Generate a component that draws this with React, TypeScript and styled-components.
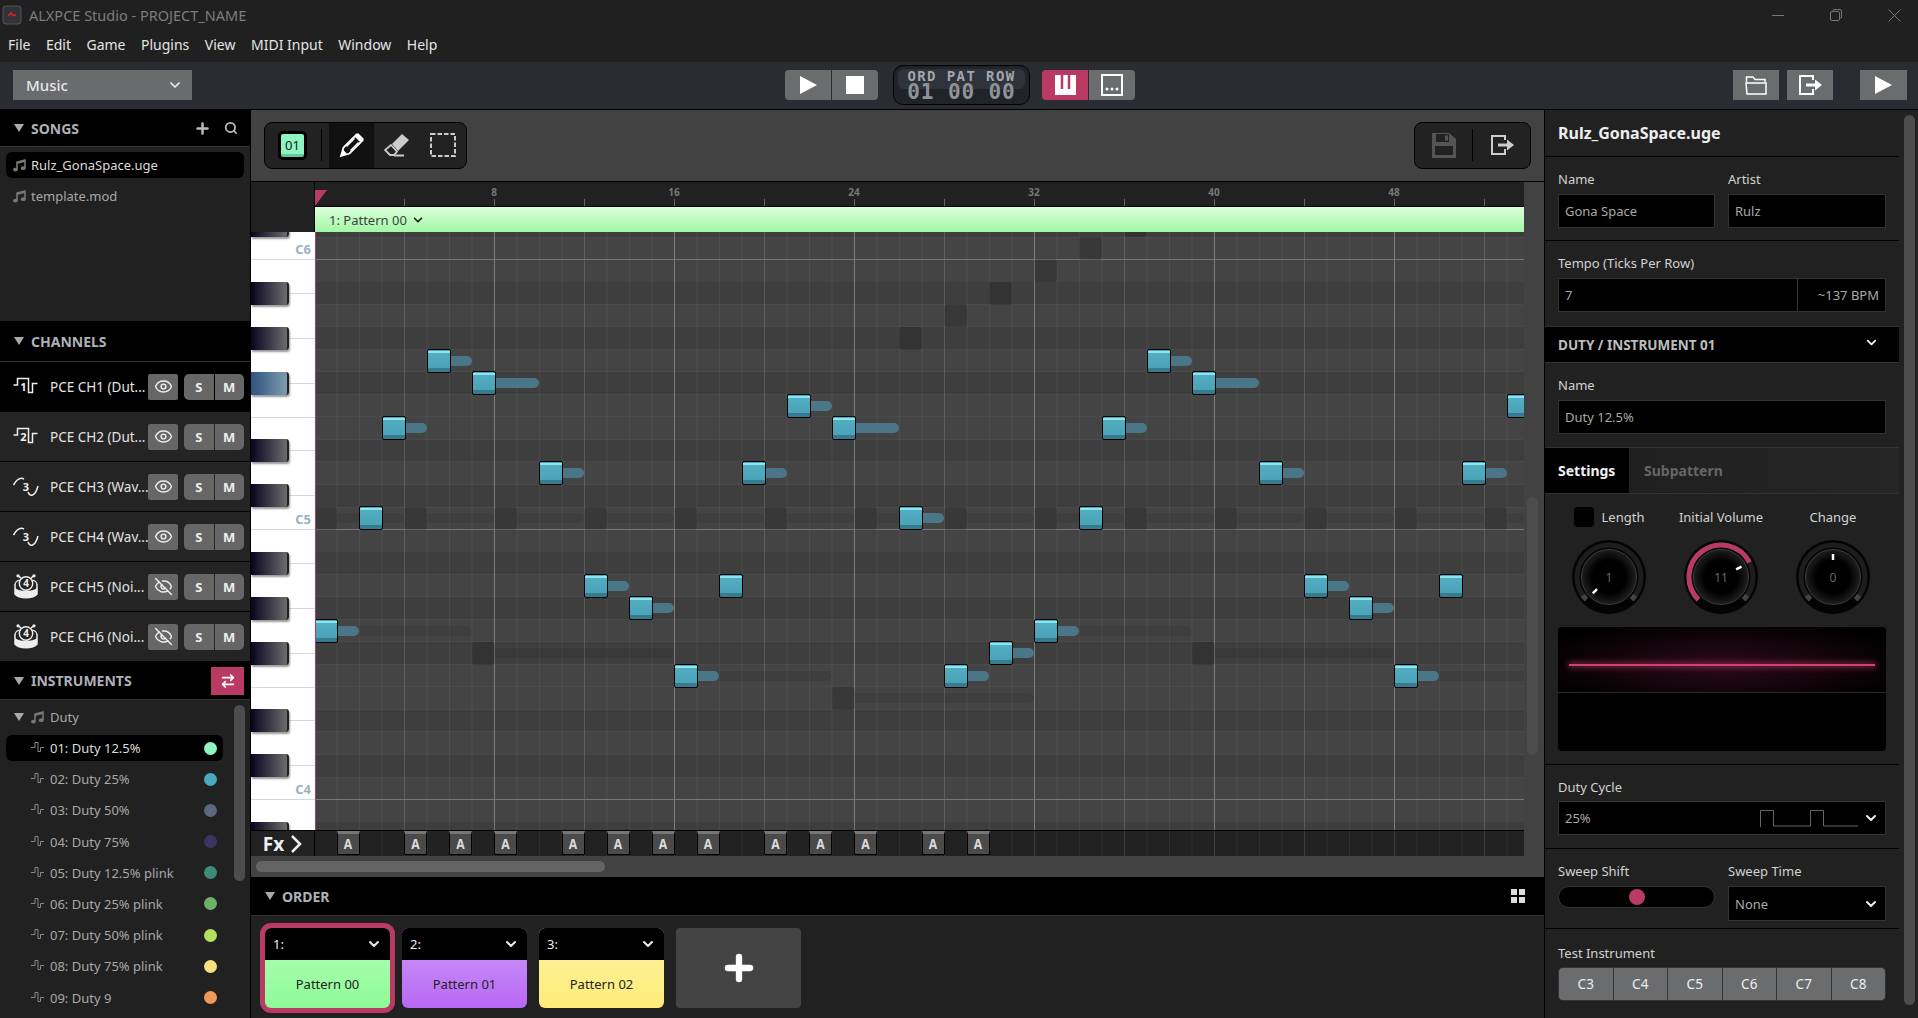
import React from "react";
import styled, { createGlobalStyle } from "styled-components";
import { ArrowRightLeft, ChevronDown, Eye, EyeOff, Plus, Search } from "lucide-react";

const FONT = `"Noto Sans", "Open Sans", sans-serif`;
const CELL = 22.5;
const ROW = 22.5;
const PINK = "#b93a63";

// Styled
const GlobalStyle = createGlobalStyle`
  html, body, #root {
    margin: 0;
    height: 100%;
    background: #212121;
  }
  body {
    overflow: hidden;
    font-family: ${FONT};
  }
  * {
    box-sizing: border-box;
  }
`;
const Page = styled.div`
  display: flex;
  flex-direction: column;
  width: 100%;
  height: 100vh;
  overflow: hidden;
`;
const TitleBar = styled.div`
  display: flex;
  align-items: center;
  flex: none;
  height: 30px;
  padding: 0 0 0 2px;
  background: #202020;
  color: #7d7d7d;
  font-size: 14.5px;
  gap: 7px;
`;
const WindowControls = styled.div`
  display: flex;
  align-items: center;
  gap: 46px;
  margin-left: auto;
  padding-right: 17px;
`;
const MenuBar = styled.div`
  display: flex;
  align-items: center;
  flex: none;
  height: 32px;
  padding: 0 8px 4px;
  gap: 15.5px;
  background: #202020;
  color: #e4e4e4;
  font-size: 14px;
`;
const Header = styled.div`
  display: flex;
  align-items: center;
  flex: none;
  height: 48px;
  padding: 0 11px 1px 13px;
  background: #2a2c31;
  border-bottom: 1px solid #000;
`;
const ModeSelect = styled.div`
  display: flex;
  align-items: center;
  justify-content: space-between;
  width: 179px;
  height: 30px;
  padding: 0 9px 0 13px;
  background: #6a6b6d;
  color: #e6e6e6;
  font-size: 15px;
  font-weight: 500;
`;
const Transport = styled.div`
  display: flex;
  align-items: center;
  gap: 15px;
  margin-left: 593px;
`;
const BtnGroup = styled.div`
  display: flex;
  border-radius: 4px;
  overflow: hidden;
  gap: 1px;
  background: #2a2c31;
`;
const HeadBtn = styled.div<{ $w?: number; $active?: boolean; $ml?: number }>`
  display: flex;
  align-items: center;
  justify-content: center;
  width: ${({ $w }) => $w ?? 46}px;
  height: 30px;
  margin-left: ${({ $ml }) => $ml ?? 0}px;
  background: ${({ $active }) => ($active ? PINK : "#6a6c6e")};
`;
const Counter = styled.div`
  position: relative;
  display: flex;
  flex-direction: column;
  align-items: center;
  width: 137px;
  height: 40px;
  margin-right: -3px;
  padding-top: 4px;
  border: 1px solid #000;
  border-radius: 10px;
  background: #20232a;
  font-family: "DejaVu Sans Mono", "Liberation Mono", monospace;
  font-weight: 700;
  color: #a3a7ab;
  &::before {
    content: "";
    position: absolute;
    left: 4px;
    right: 4px;
    top: 3px;
    height: 20px;
    border-radius: 6px;
    background: #2f343c;
  }
`;
const CounterTop = styled.span`
  position: relative;
  font-size: 14px;
  letter-spacing: 1.4px;
  height: 13px;
  line-height: 13px;
  white-space: pre;
`;
const CounterBottom = styled.span`
  position: relative;
  font-size: 21px;
  letter-spacing: 0.9px;
  height: 19px;
  line-height: 19px;
  white-space: pre;
  color: #8f9397;
`;
const HeaderRight = styled.div`
  display: flex;
  align-items: center;
  gap: 8px;
  margin-left: auto;
`;
const Main = styled.div`
  flex: 1;
  display: flex;
  min-height: 0;
`;

// Sidebar
const Sidebar = styled.aside`
  display: flex;
  flex-direction: column;
  width: 251px;
  flex: none;
  border-right: 1px solid #000;
  background: #212121;
`;
const PaneHead = styled.div<{ $h: number }>`
  display: flex;
  align-items: center;
  flex: none;
  height: ${({ $h }) => $h}px;
  padding: 0 6px 0 14px;
  background: #000;
  border-bottom: 1px solid #333;
  color: #aeb2b8;
  font-size: 14px;
  font-weight: 700;
`;
const Triangle = styled.span`
  flex: none;
  width: 0;
  height: 0;
  margin-right: 7px;
  border-left: 5px solid transparent;
  border-right: 5px solid transparent;
  border-top: 8px solid #aaa;
`;
const PaneActions = styled.div`
  display: flex;
  align-items: center;
  gap: 13px;
  margin-left: auto;
  padding-right: 6px;
  color: #bbb;
`;
const SongList = styled.div`
  display: flex;
  flex-direction: column;
  height: 174px;
  flex: none;
  padding: 5px 6px;
  gap: 5px;
`;
const TreeRow = styled.div<{ $selected?: boolean; $indent?: number }>`
  display: flex;
  align-items: center;
  flex: none;
  height: 26px;
  padding-left: ${({ $indent }) => $indent ?? 7}px;
  gap: 5px;
  border-radius: 6px;
  background: ${({ $selected }) => ($selected ? "#000" : "transparent")};
  color: ${({ $selected }) => ($selected ? "#dcdcdc" : "#a8a8a8")};
  font-size: 13px;
`;
const ChannelRow = styled.div<{ $active?: boolean }>`
  display: flex;
  align-items: center;
  flex: none;
  height: 50px;
  padding: 0 6px 0 13px;
  background: ${({ $active }) => ($active ? "#000" : "#242424")};
  border-bottom: 1px solid #000;
  color: #e2e2e2;
  font-size: 13.5px;
`;
const ChannelName = styled.span`
  margin-left: 11px;
  width: 98px;
  white-space: nowrap;
  overflow: hidden;
`;
const EyeBtn = styled.div`
  display: flex;
  align-items: center;
  justify-content: center;
  width: 30px;
  height: 26px;
  border-radius: 2px;
  background: #666;
  color: #eee;
`;
const SoloGroup = styled.div`
  display: flex;
  gap: 1px;
  width: 60px;
  height: 26px;
  margin-left: 6px;
  border-radius: 5px;
  overflow: hidden;
`;
const SoloBtn = styled.div`
  flex: 1;
  display: flex;
  align-items: center;
  justify-content: center;
  background: #666;
  color: #eee;
  font-size: 13px;
  font-weight: 700;
`;
const SwapBtn = styled.div`
  display: flex;
  align-items: center;
  justify-content: center;
  width: 33px;
  height: 28px;
  margin-left: auto;
  background: ${PINK};
  color: #fff;
`;
const InstrumentPane = styled.div`
  position: relative;
  flex: 1;
  min-height: 0;
  padding: 4px 27px 0 6px;
  overflow: hidden;
`;
const GroupRow = styled(TreeRow)`
  gap: 0;
  margin-bottom: 5px;
  svg {
    margin-right: 6px;
  }
`;
const InstrumentRow = styled(TreeRow)`
  gap: 6px;
  margin-bottom: 5.2px;
  padding-right: 6px;
`;
const Dot = styled.span<{ $color: string }>`
  width: 13px;
  height: 13px;
  margin-left: auto;
  border-radius: 50%;
  background: ${({ $color }) => $color};
`;
const VScroll = styled.div<{ $top: number; $h: number; $right: number }>`
  position: absolute;
  top: ${({ $top }) => $top}px;
  right: ${({ $right }) => $right}px;
  width: 11px;
  height: ${({ $h }) => $h}px;
  border-radius: 6px;
  background: #4d4d4d;
`;

// Center
const Center = styled.section`
  flex: 1;
  min-width: 0;
  display: flex;
  flex-direction: column;
  background: #424242;
`;
const EditorBar = styled.div`
  display: flex;
  align-items: center;
  justify-content: space-between;
  flex: none;
  height: 72px;
  padding: 0 13px 1px 13px;
  border-bottom: 1px solid #000;
`;
const ToolBox = styled.div<{ $flush?: boolean }>`
  display: flex;
  align-items: center;
  height: 47px;
  padding-left: ${({ $flush }) => ($flush ? 0 : 13)}px;
  border: 1px solid #000;
  border-radius: 8px;
  background: #222;
  overflow: hidden;
`;
const Swatch = styled.div`
  display: flex;
  align-items: center;
  justify-content: center;
  width: 29px;
  height: 29px;
  border: 3px solid #000;
  border-radius: 5px;
  background: linear-gradient(#8ff5c0 0 85%, #66c79a 85%);
  color: #123;
  font-size: 13px;
`;
const ToolDivider = styled.span<{ $flush?: boolean }>`
  width: 1px;
  height: 32px;
  margin: ${({ $flush }) => ($flush ? "0" : "0 7px 0 14px")};
  background: #000;
`;
const Tool = styled.div<{ $active?: boolean; $w?: number }>`
  display: flex;
  align-items: center;
  justify-content: center;
  width: ${({ $w }) => $w ?? 46}px;
  height: 100%;
  background: ${({ $active }) => ($active ? "#111" : "transparent")};
`;
const RollRow = styled.div`
  flex: 1;
  min-height: 0;
  display: flex;
`;
const Roll = styled.div`
  width: 1273px;
  flex: none;
  display: grid;
  grid-template-columns: 64px minmax(0, 1fr);
  grid-template-rows: 50px minmax(0, 1fr) 26px;
`;
const Gutter = styled.div`
  position: relative;
  flex: 1;
`;
const Corner = styled.div`
  background: #222;
  border-right: 1px solid #000;
`;
const RollHead = styled.div`
  display: flex;
  flex-direction: column;
  min-width: 0;
`;
const Ruler = styled.div`
  position: relative;
  height: 25px;
  flex: none;
  background: #212121;
  border-bottom: 1px solid #000;
  overflow: hidden;
`;
const Tick = styled.span`
  position: absolute;
  bottom: 0;
  width: 1px;
  height: 7px;
  background: #666;
`;
const TickLabel = styled.span`
  position: absolute;
  top: 5px;
  transform: translateX(-50%);
  color: #777;
  font-size: 10px;
  font-weight: 700;
  line-height: 1;
`;
const Playhead = styled.span`
  position: absolute;
  left: 0;
  top: 8px;
  width: 0;
  height: 0;
  border-top: 16px solid ${PINK};
  border-right: 12px solid transparent;
`;
const PatternBar = styled.div`
  display: flex;
  align-items: center;
  gap: 4px;
  flex: 1;
  padding-left: 14px;
  background: linear-gradient(#dbffdb, #a2f8a6);
  color: #3f3f3f;
  font-size: 13px;
`;
const Piano = styled.div`
  position: relative;
  overflow: hidden;
  background: #fff;
`;
const BlackKey = styled.span<{ $playing?: boolean }>`
  position: absolute;
  left: 0;
  width: 38px;
  height: 23px;
  border-radius: 0 3px 3px 0;
  border-right: 2px solid #222;
  background: ${({ $playing }) =>
    $playing
      ? "linear-gradient(90deg, #2f5280, #7f9cae)"
      : "linear-gradient(90deg, #07031f, #6c6c6c)"};
  box-shadow: 1px 2px 2px rgba(0, 0, 0, 0.4);
`;
const KeyLine = styled.span<{ $wide: boolean }>`
  position: absolute;
  right: 0;
  left: ${({ $wide }) => ($wide ? 0 : "37px")};
  height: 1px;
  background: #d4d8dc;
`;
const KeyLabel = styled.span`
  position: absolute;
  right: 4px;
  color: #9fb0c2;
  font-size: 13px;
  font-weight: 700;
  line-height: 1;
`;
const blackRows = [1, 3, 5, 8, 10];
const bandStops = Array.from({ length: 12 }, (_, i) => {
  const top = i * ROW;
  const colour = blackRows.includes(i) ? "#3e3e3e" : "#444";
  return `#4a4a4a ${top}px ${top + 1}px, ${colour} ${top + 1}px ${top + ROW}px`;
}).join(", ");
const Canvas = styled.div`
  position: relative;
  overflow: hidden;
  border-left: 1px solid ${PINK};
  background-color: #444;
  background-image:
    linear-gradient(#777 0 1px, transparent 1px),
    linear-gradient(90deg, rgba(255, 255, 255, 0.2) 0 1px, transparent 1px),
    linear-gradient(90deg, rgba(255, 255, 255, 0.1) 0 1px, transparent 1px),
    linear-gradient(90deg, rgba(255, 255, 255, 0.05) 0 1px, transparent 1px),
    linear-gradient(${bandStops});
  background-size:
    100% 270px,
    ${CELL * 8}px 100%,
    ${CELL * 4}px 100%,
    ${CELL}px 100%,
    100% 270px;
  background-position:
    0 27px,
    -2px 0,
    -2px 0,
    -2px 0,
    0 27px;
`;
const Ghost = styled.div`
  position: absolute;
  display: flex;
  align-items: center;
  height: 23px;
`;
const GhostHead = styled.span`
  flex: none;
  width: 23px;
  height: 23px;
  border-radius: 3px;
  background: rgba(0, 0, 0, 0.17);
`;
const GhostTail = styled.span`
  flex: 1;
  height: 10px;
  border-radius: 0 5px 5px 0;
  background: rgba(0, 0, 0, 0.08);
`;
const Note = styled(Ghost)`
  z-index: 1;
`;
const NoteHead = styled.span`
  flex: none;
  width: 24px;
  height: 24px;
  border: 1px solid #000;
  border-radius: 2px;
  background: linear-gradient(
    #4fa9bd 0 1px,
    #88e6ef 1px 3px,
    #53adc1 3px,
    #4aa3b8 18px,
    #377c8e 18px
  );
`;
const NoteTail = styled.span`
  flex: 1;
  height: 10px;
  border-radius: 0 5px 5px 0;
  background: #4a7687;
`;
const FxLabel = styled.div`
  display: flex;
  align-items: center;
  justify-content: center;
  gap: 6px;
  background: #222;
  border-top: 1px solid #000;
  border-right: 1px solid #000;
  color: #eee;
  font-size: 19px;
  font-weight: 700;
`;
const FxLane = styled.div`
  position: relative;
  overflow: hidden;
  border-top: 1px solid #000;
  background-color: #222;
  background-image:
    linear-gradient(90deg, #3e3e3e 0 1px, transparent 1px),
    linear-gradient(90deg, #2e2e2e 0 1px, transparent 1px);
  background-size: ${CELL * 4}px 100%, ${CELL}px 100%;
  background-position: -1px 0, -1px 0;
`;
const FxChip = styled.span`
  position: absolute;
  top: 0;
  width: 23px;
  height: 24px;
  padding-top: 4px;
  border: 1px solid #000;
  border-top: 3px solid #777;
  background: #4a4a4a;
  color: #ddd;
  font-family: "Liberation Mono", monospace;
  font-size: 14px;
  font-weight: 700;
  line-height: 1;
  text-align: center;
`;
const HScroll = styled.div`
  flex: none;
  height: 21px;
  padding: 5px 0 0 5px;
`;
const HThumb = styled.div`
  width: 349px;
  height: 11px;
  border-radius: 6px;
  background: #646464;
`;
const OrderHead = styled(PaneHead)`
  padding-left: 14px;
  padding-right: 19px;
`;
const GridGlyph = styled.span`
  display: grid;
  grid-template-columns: 6px 6px;
  gap: 2px;
  margin-left: auto;
  span {
    width: 6px;
    height: 6px;
    background: #ddd;
  }
`;
const OrderBody = styled.div`
  flex: none;
  height: 102px;
  display: flex;
  align-items: center;
  gap: 12px;
  padding: 1px 0 0 13px;
  background: #212121;
`;
const OrderCard = styled.div<{ $top: string; $bottom: string }>`
  display: flex;
  flex-direction: column;
  width: 125px;
  height: 80px;
  border-radius: 6px;
  overflow: hidden;
  background: linear-gradient(${({ $top }) => $top}, ${({ $bottom }) => $bottom});
  color: #222;
  font-size: 13px;
`;
const SelectedRing = styled.div<{ $selected?: boolean }>`
  padding: ${({ $selected }) => ($selected ? "5px" : "0")};
  margin: ${({ $selected }) => ($selected ? "0 -5px 0 -4px" : "0")};
  border-radius: 11px;
  background: ${({ $selected }) => ($selected ? PINK : "transparent")};
`;
const CardHead = styled.div`
  display: flex;
  align-items: center;
  justify-content: space-between;
  flex: none;
  height: 32px;
  padding: 0 8px;
  background: #000;
  color: #eee;
`;
const CardName = styled.div`
  flex: 1;
  display: flex;
  align-items: center;
  justify-content: center;
`;
const AddCard = styled.div`
  display: flex;
  align-items: center;
  justify-content: center;
  width: 125px;
  height: 80px;
  border-radius: 4px;
  background: #444;
  color: #fff;
`;

// Right panel
const RightPanel = styled.aside`
  position: relative;
  width: 374px;
  flex: none;
  border-left: 1px solid #000;
  background: #212121;
`;
const PanelBody = styled.div`
  display: flex;
  flex-direction: column;
  width: 354px;
  height: 100%;
`;
const PanelTitle = styled.div`
  display: flex;
  align-items: center;
  height: 47px;
  flex: none;
  padding: 0 13px;
  border-bottom: 1px solid #000;
  color: #eee;
  font-size: 16px;
  font-weight: 700;
`;
const Section = styled.div<{ $pt: number; $pb: number; $plain?: boolean }>`
  flex: none;
  padding: ${({ $pt, $pb }) => `${$pt}px 13px ${$pb}px`};
  border-bottom: 1px solid ${({ $plain }) => ($plain ? "transparent" : "#000")};
`;
const FieldRow = styled.div`
  display: grid;
  grid-template-columns: 157px 158px;
  gap: 13px;
`;
const Label = styled.div<{ $mb?: number }>`
  height: 16px;
  margin-bottom: ${({ $mb }) => $mb ?? 7}px;
  color: #d2d2d2;
  font-size: 13px;
  line-height: 16px;
  white-space: nowrap;
`;
const Field = styled.div<{ $h?: number }>`
  display: flex;
  align-items: center;
  height: ${({ $h }) => $h ?? 34}px;
  padding: 0 6px;
  border: 1px solid #333;
  background: #000;
  color: #a8a8a8;
  font-size: 13px;
`;
const BpmCell = styled.span`
  display: flex;
  align-items: center;
  justify-content: flex-end;
  width: 88px;
  height: 100%;
  margin: 0 -6px 0 auto;
  padding-right: 6px;
  border-left: 1px solid #333;
`;
const SectionBar = styled.div`
  display: flex;
  align-items: center;
  justify-content: space-between;
  flex: none;
  height: 37px;
  padding: 0 20px 0 13px;
  border-top: 1px solid #333;
  border-bottom: 1px solid #333;
  background: #000;
  color: #bdbdbd;
  font-size: 13.5px;
  font-weight: 700;
  svg {
    margin-bottom: 5px;
  }
`;
const Tabs = styled.div`
  display: flex;
  flex: none;
  height: 47px;
  border-top: 1px solid #333;
  border-bottom: 1px solid #333;
  background: linear-gradient(90deg, #1e1e1e, #262626);
`;
const Tab = styled.div<{ $active?: boolean }>`
  display: flex;
  align-items: center;
  width: 84px;
  padding-left: ${({ $active }) => ($active ? 13 : 15)}px;
  background: ${({ $active }) => ($active ? "#000" : "transparent")};
  color: ${({ $active }) => ($active ? "#f2f2f2" : "#666")};
  font-size: 14px;
  font-weight: 700;
`;
const KnobSection = styled.div`
  flex: none;
  height: 271px;
  padding: 13px 13px 0;
  border-bottom: 1px solid #000;
`;
const KnobGrid = styled.div`
  display: grid;
  grid-template-columns: repeat(3, 112px);
  margin: 0 -5px;
`;
const KnobCol = styled.div`
  display: flex;
  flex-direction: column;
  align-items: center;
`;
const KnobLabel = styled.div`
  display: flex;
  align-items: center;
  gap: 8px;
  height: 20px;
  margin-bottom: 13px;
  color: #d2d2d2;
  font-size: 13px;
  white-space: nowrap;
`;
const Check = styled.span`
  width: 20px;
  height: 20px;
  border-radius: 4px;
  background: #000;
`;
const Scope = styled.div`
  display: flex;
  flex-direction: column;
  height: 124px;
  margin-top: 13px;
  border-radius: 4px;
  overflow: hidden;
  background: #000;
`;
const ScopeTop = styled.div`
  flex: none;
  height: 66px;
  padding: 37px 11px 0;
  border-bottom: 1px solid #2a2a2a;
  background: radial-gradient(ellipse 60% 70% at 50% 58%, #2c0a18, #000);
`;
const ScopeLine = styled.div`
  height: 2px;
  background: #cf4271;
  box-shadow: 0 0 6px 1px rgba(207, 66, 113, 0.7);
`;
const SelectField = styled(Field)`
  justify-content: space-between;
  padding-right: 6px;
  color: #a8a8a8;
`;
const DutyRight = styled.span`
  display: flex;
  align-items: center;
  gap: 5px;
`;
const Slider = styled.div`
  position: relative;
  width: 157px;
  height: 22px;
  margin-top: 6px;
  border: 1px solid #333;
  border-radius: 11px;
  background: #000;
`;
const SliderThumb = styled.span`
  position: absolute;
  left: 70px;
  top: 2px;
  width: 16px;
  height: 16px;
  border-radius: 50%;
  background: ${PINK};
`;
const NoteBtns = styled.div`
  display: grid;
  grid-template-columns: repeat(6, 1fr);
  gap: 1px;
  height: 34px;
  border: 1px solid #333;
  border-radius: 5px;
  overflow: hidden;
  background: #333;
`;
const NoteBtn = styled.div`
  display: flex;
  align-items: center;
  justify-content: center;
  background: #6a6c6e;
  color: #eee;
  font-size: 13.5px;
`;

// Drawings
const MusicIcon = ({ color = "#777" }: { color?: string }) => (
  <svg width="13" height="13" viewBox="0 0 13 13" style={{ flex: "none" }}>
    <path d="M4 10.5V3l8-2v8" fill="none" stroke={color} strokeWidth="1.6" />
    <path d="M4 3l8-2v2l-8 2z" fill={color} />
    <ellipse cx="2.4" cy="10.6" rx="2.4" ry="1.9" fill={color} />
    <ellipse cx="10.2" cy="9.2" rx="2.4" ry="1.9" fill={color} />
  </svg>
);

const PulseIcon = ({ color }: { color: string }) => (
  <svg width="13" height="12" viewBox="0 0 13 12" style={{ flex: "none" }}>
    <path d="M0 5.5H4V.5H7V9.5H9.5V5.5H13" fill="none" stroke={color} strokeWidth="1" />
  </svg>
);

const ChannelIcon = ({ kind, digit }: { kind: "duty" | "wave" | "noise"; digit: number }) => (
  <svg width="26" height="26" viewBox="0 0 26 26" style={{ flex: "none" }}>
    {kind === "duty" && (
      <path d="M0.5 11H4.5V4.5H15.5V18.5H19.5V9.5H24.5" fill="none" stroke="#eee" strokeWidth="1.5" />
    )}
    {kind === "wave" && (
      <path d="M0.5 11C4 5 7 3 11 5M15 18C17 23 22 23 25 12" fill="none" stroke="#eee" strokeWidth="1.5" />
    )}
    {kind === "noise" && (
      <>
        <path d="M5 1.5L9 5M21 1.5L17 5" stroke="#eee" strokeWidth="1.5" />
        <circle cx="5" cy="1.8" r="1.6" fill="#eee" />
        <circle cx="21" cy="1.8" r="1.6" fill="#eee" />
        <path d="M2 10V20C6 25 20 25 24 20V10" fill="none" stroke="#eee" strokeWidth="1.5" />
        <path d="M2 14C6 18 20 18 24 14V20C20 25 6 25 2 20Z" fill="#eee" />
        <path d="M2 10C3 7 6 6 8 6M24 10C23 7 20 6 18 6" fill="none" stroke="#eee" strokeWidth="1.2" />
        <circle cx="13" cy="9.5" r="6.7" fill="#222" stroke="#eee" strokeWidth="1.4" />
      </>
    )}
    <text
      x={kind === "duty" ? 10.5 : 13}
      y={kind === "noise" ? 13 : 16.5}
      textAnchor="middle"
      fontFamily="Noto Sans, sans-serif"
      fontWeight="700"
      fontSize={kind === "noise" ? 10 : 11}
      fill="#eee"
    >
      {digit}
    </text>
  </svg>
);

const PlayIcon = () => (
  <svg width="17" height="18" viewBox="0 0 17 18">
    <path d="M0 0L17 9L0 18Z" fill="#fff" />
  </svg>
);

const ExportIcon = ({ color = "#fff" }: { color?: string }) => (
  <svg width="24" height="22" viewBox="0 0 24 22">
    <path d="M15 6V2H2V20H15V15" fill="none" stroke={color} strokeWidth="2" />
    <path d="M8 9.5H17V5.5L24 11L17 16.5V12.5H8Z" fill={color} />
  </svg>
);

const Chevron = ({ size = 16 }: { size?: number }) => (
  <ChevronDown size={size} strokeWidth={3} color="#eee" />
);

const polar = (deg: number, r: number) => {
  const a = ((deg - 90) * Math.PI) / 180;
  return [r * Math.cos(a), r * Math.sin(a)];
};
const arc = (from: number, to: number, r: number) => {
  const [x1, y1] = polar(from, r);
  const [x2, y2] = polar(to, r);
  return `M${x1} ${y1}A${r} ${r} 0 ${to - from > 180 ? 1 : 0} 1 ${x2} ${y2}`;
};

const Knob = ({ value, angle, start }: { value: number; angle: number; start?: number }) => {
  const [x1, y1] = polar(angle, 17);
  const [x2, y2] = polar(angle, 23);
  return (
    <svg width="74" height="74" viewBox="-37 -37 74 74">
      <defs>
        <radialGradient id="knobFace">
          <stop offset="60%" stopColor="#000" />
          <stop offset="100%" stopColor="#1f1f1f" />
        </radialGradient>
      </defs>
      <circle r="37" fill="#040404" />
      <path d={arc(-135, 135, 32)} fill="none" stroke="#1d1d1d" strokeWidth="5" />
      <path d={arc(-135, -125, 32)} fill="none" stroke="#444" strokeWidth="5" />
      <path d={arc(125, 135, 32)} fill="none" stroke="#444" strokeWidth="5" />
      {start !== undefined && <path d={arc(start, angle, 32)} fill="none" stroke={PINK} strokeWidth="5" />}
      <circle r="27.5" fill="url(#knobFace)" stroke="#3a3a3a" strokeWidth="1" />
      <line x1={x1} y1={y1} x2={x2} y2={y2} stroke="#fff" strokeWidth="2.5" />
      <text y="4.5" textAnchor="middle" fontFamily="Noto Sans, sans-serif" fontSize="12" fill="#666">
        {value}
      </text>
    </svg>
  );
};

// Data
const menuItems = ["File", "Edit", "Game", "Plugins", "View", "MIDI Input", "Window", "Help"];
const channels = [
  { name: "PCE CH1 (Dut...", kind: "duty", digit: 1, visible: true },
  { name: "PCE CH2 (Dut...", kind: "duty", digit: 2, visible: true },
  { name: "PCE CH3 (Wav...", kind: "wave", digit: 3, visible: true },
  { name: "PCE CH4 (Wav...", kind: "wave", digit: 3, visible: true },
  { name: "PCE CH5 (Noi...", kind: "noise", digit: 4, visible: false },
  { name: "PCE CH6 (Noi...", kind: "noise", digit: 4, visible: false },
] as const;
const instruments: [string, string][] = [
  ["01: Duty 12.5%", "#8ff5c0"],
  ["02: Duty 25%", "#4aa8c0"],
  ["03: Duty 50%", "#5c6880"],
  ["04: Duty 75%", "#3a3560"],
  ["05: Duty 12.5% plink", "#3f8a78"],
  ["06: Duty 25% plink", "#6fb068"],
  ["07: Duty 50% plink", "#b4e060"],
  ["08: Duty 75% plink", "#f8e080"],
  ["09: Duty 9", "#f09858"],
];
// [cell, semitones above C5, length]
const notes = [
  [5, 7, 2], [7, 6, 3], [3, 4, 2], [2, 0, 1], [0, -5, 2], [10, 2, 2], [12, -3, 2], [14, -4, 2],
  [16, -7, 2], [18, -3, 1], [19, 2, 2], [21, 5, 2], [23, 4, 3], [26, 0, 2], [28, -7, 2],
  [30, -6, 2], [32, -5, 2], [34, 0, 1], [35, 4, 2], [37, 7, 2], [39, 6, 3], [42, 2, 2],
  [44, -3, 2], [46, -4, 2], [48, -7, 2], [50, -3, 1], [51, 2, 2], [53, 5, 2],
];
const ghosts = [
  ...Array.from({ length: 14 }, (_, i) => [i * 4, 0, 4]),
  [26, 8, 1], [28, 9, 1], [30, 10, 1], [32, 11, 1], [34, 12, 1], [36, 13, 1],
  [0, -5, 7], [7, -6, 9], [16, -7, 7], [23, -8, 9], [32, -5, 7], [39, -6, 9], [48, -7, 9],
];
const fxCells = [1, 4, 6, 8, 11, 13, 15, 17, 20, 22, 24, 27, 29];
const semis = [1, 3, 6, 8, 10, 13, -2, -4, -6, -9, -11, -14];
const keyLines: [number, boolean][] = [
  [27, true], [61, false], [106, false], [151, false], [185, true], [218, false], [263, false],
  [297, true], [331, false], [376, false], [421, false], [455, true], [488, false], [533, false], [567, true],
];
const rowTop = (r: number) => 274.5 - r * ROW;
const cellLeft = (cell: number) => cell * CELL - 2;

const App = () => {
  return (
    <Page>
      <GlobalStyle />
      <TitleBar>
        <svg width="20" height="20" viewBox="0 0 20 20">
          <rect x="1" y="1" width="18" height="18" rx="3" fill="#33343a" stroke="#555" />
          <path d="M6 11L9 8L10 10L14 10" fill="none" stroke="#d22" strokeWidth="1.5" />
        </svg>
        <span>ALXPCE Studio - PROJECT_NAME</span>
        <WindowControls>
          <svg width="12" height="12" viewBox="0 0 12 12">
            <path d="M0 6.5H12" stroke="#777" />
          </svg>
          <svg width="12" height="12" viewBox="0 0 12 12">
            <path d="M3 2.5V1.5Q3 .5 4 .5H10Q11.5 .5 11.5 2V8Q11.5 9 10.5 9H9.5" fill="none" stroke="#777" />
            <rect x=".5" y="2.5" width="9" height="9" rx="1.5" fill="none" stroke="#777" />
          </svg>
          <svg width="13" height="13" viewBox="0 0 13 13">
            <path d="M.5 .5L12.5 12.5M12.5 .5L.5 12.5" stroke="#777" />
          </svg>
        </WindowControls>
      </TitleBar>
      <MenuBar>
        {menuItems.map((item) => (
          <span key={item}>{item}</span>
        ))}
      </MenuBar>
      <Header>
        <ModeSelect>
          Music
          <ChevronDown size={16} strokeWidth={2.5} color="#eee" />
        </ModeSelect>
        <Transport>
          <BtnGroup>
            <HeadBtn>
              <PlayIcon />
            </HeadBtn>
            <HeadBtn>
              <svg width="18" height="18" viewBox="0 0 18 18">
                <rect width="18" height="18" fill="#fff" />
              </svg>
            </HeadBtn>
          </BtnGroup>
          <Counter>
            <CounterTop>ORD PAT ROW</CounterTop>
            <CounterBottom>01 00 00</CounterBottom>
          </Counter>
          <BtnGroup>
            <HeadBtn $active>
              <svg width="21" height="20" viewBox="0 0 21 20">
                <rect width="21" height="20" fill="#fff" />
                <path d="M7 0V14M14 0V14" stroke={PINK} strokeWidth="2.5" />
              </svg>
            </HeadBtn>
            <HeadBtn>
              <svg width="22" height="22" viewBox="0 0 22 22">
                <rect x="1" y="1" width="20" height="20" fill="none" stroke="#fff" strokeWidth="2" />
                <circle cx="6" cy="15" r="1.5" fill="#fff" />
                <circle cx="11" cy="15" r="1.5" fill="#fff" />
                <circle cx="16" cy="15" r="1.5" fill="#fff" />
              </svg>
            </HeadBtn>
          </BtnGroup>
        </Transport>
        <HeaderRight>
          <HeadBtn>
            <svg width="22" height="19" viewBox="0 0 22 19">
              <path d="M1.5 6V1H8L10 3.5H20V6" fill="none" stroke="#fff" strokeWidth="1.5" />
              <path d="M1 7H21V18H2Z" fill="none" stroke="#fff" strokeWidth="1.5" />
            </svg>
          </HeadBtn>
          <HeadBtn>
            <ExportIcon />
          </HeadBtn>
          <HeadBtn $w={47} $ml={19}>
            <PlayIcon />
          </HeadBtn>
        </HeaderRight>
      </Header>
      <Main>
        <Sidebar>
          <PaneHead $h={37}>
            <Triangle />
            SONGS
            <PaneActions>
              <Plus size={17} strokeWidth={3.5} color="#bbb" />
              <Search size={14} strokeWidth={3} color="#bbb" />
            </PaneActions>
          </PaneHead>
          <SongList>
            <TreeRow $selected>
              <MusicIcon />
              Rulz_GonaSpace.uge
            </TreeRow>
            <TreeRow>
              <MusicIcon />
              template.mod
            </TreeRow>
          </SongList>
          <PaneHead $h={41}>
            <Triangle />
            CHANNELS
          </PaneHead>
          {channels.map((channel, index) => (
            <ChannelRow key={channel.name} $active={index === 0}>
              <ChannelIcon kind={channel.kind} digit={channel.digit} />
              <ChannelName>{channel.name}</ChannelName>
              <EyeBtn>
                {channel.visible ? <Eye size={19} strokeWidth={1.8} /> : <EyeOff size={19} strokeWidth={1.8} />}
              </EyeBtn>
              <SoloGroup>
                <SoloBtn>S</SoloBtn>
                <SoloBtn>M</SoloBtn>
              </SoloGroup>
            </ChannelRow>
          ))}
          <PaneHead $h={38}>
            <Triangle />
            INSTRUMENTS
            <SwapBtn>
              <ArrowRightLeft size={16} strokeWidth={2.5} />
            </SwapBtn>
          </PaneHead>
          <InstrumentPane>
            <GroupRow $indent={8}>
              <Triangle />
              <MusicIcon />
              Duty
            </GroupRow>
            {instruments.map(([name, color], index) => (
              <InstrumentRow key={name} $selected={index === 0} $indent={25}>
                <PulseIcon color="#888" />
                {name}
                <Dot $color={color} />
              </InstrumentRow>
            ))}
            <VScroll $top={5} $h={176} $right={5} />
          </InstrumentPane>
        </Sidebar>

        <Center>
          <EditorBar>
            <ToolBox>
              <Swatch>01</Swatch>
              <ToolDivider />
              <Tool $active $w={45}>
                <svg width="26" height="26" viewBox="0 0 26 26">
                  <path d="M2 24L4.5 15.5L17.5 2.5L23.5 8.5L10.5 21.5Z" fill="none" stroke="#fff" strokeWidth="1.8" />
                  <path d="M2 24L3.8 17.5L8.5 22.2Z" fill="#fff" />
                  <path d="M15.5 4.5L21.5 10.5L25 7L19 1Z" fill="#fff" />
                  <path d="M7.5 14.5L15.5 6.5M11.5 18.5L19.5 10.5" stroke="#fff" strokeWidth="1.2" />
                </svg>
              </Tool>
              <Tool>
                <svg width="26" height="24" viewBox="0 0 26 24">
                  <path d="M8 11L18 1L25 7L14 18Z" fill="#ccc" />
                  <path d="M7 12L13 18.5L10 22H6L1 17Z" fill="none" stroke="#ccc" strokeWidth="1.8" />
                  <path d="M10 22.5H20" stroke="#ccc" strokeWidth="1.8" />
                </svg>
              </Tool>
              <Tool>
                <svg width="26" height="24" viewBox="0 0 26 24">
                  <rect x="1" y="1" width="24" height="22" fill="none" stroke="#ccc" strokeWidth="2" strokeDasharray="4.5 2" />
                </svg>
              </Tool>
            </ToolBox>
            <ToolBox $flush>
              <Tool $w={57}>
                <svg width="24" height="25" viewBox="0 0 24 25">
                  <path d="M0 0H17L24 6V25H0Z" fill="#555" />
                  <rect x="4" y="1" width="13" height="8" fill="#222" />
                  <rect x="13" y="2.5" width="3" height="5" fill="#555" />
                  <rect x="3" y="13" width="18" height="9" fill="#222" />
                </svg>
              </Tool>
              <ToolDivider $flush />
              <Tool $w={57}>
                <ExportIcon color="#ccc" />
              </Tool>
            </ToolBox>
          </EditorBar>
          <RollRow>
            <Roll>
              <Corner />
              <RollHead>
                <Ruler>
                  <Playhead />
                  {Array.from({ length: 13 }, (_, i) => (
                    <Tick key={i} style={{ left: (i + 1) * 4 * CELL - 1 }} />
                  ))}
                  {Array.from({ length: 6 }, (_, i) => (
                    <TickLabel key={i} style={{ left: (i + 1) * 8 * CELL - 1 }}>
                      {(i + 1) * 8}
                    </TickLabel>
                  ))}
                </Ruler>
                <PatternBar>
                  1: Pattern 00
                  <ChevronDown size={14} strokeWidth={3} color="#222" />
                </PatternBar>
              </RollHead>
              <Piano>
                {keyLines.map(([y, wide]) => (
                  <KeyLine key={y} $wide={wide} style={{ top: y }} />
                ))}
                {semis.map((r) => (
                  <BlackKey key={r} $playing={r === 6} style={{ top: rowTop(r) }} />
                ))}
                <KeyLabel style={{ top: 11 }}>C6</KeyLabel>
                <KeyLabel style={{ top: 281 }}>C5</KeyLabel>
                <KeyLabel style={{ top: 551 }}>C4</KeyLabel>
              </Piano>
              <Canvas>
                {ghosts.map(([cell, r, len]) => (
                  <Ghost key={`${cell}:${r}`} style={{ left: cellLeft(cell), top: rowTop(r), width: len * CELL }}>
                    <GhostHead />
                    <GhostTail />
                  </Ghost>
                ))}
                {notes.map(([cell, r, len]) => (
                  <Note key={`${cell}:${r}`} style={{ left: cellLeft(cell), top: rowTop(r), width: len * CELL }}>
                    <NoteHead />
                    {len > 1 && <NoteTail />}
                  </Note>
                ))}
              </Canvas>
              <FxLabel>
                Fx
                <svg width="12" height="18" viewBox="0 0 12 18">
                  <path d="M2 1L10 9L2 17" fill="none" stroke="#eee" strokeWidth="2.5" />
                </svg>
              </FxLabel>
              <FxLane>
                {fxCells.map((cell) => (
                  <FxChip key={cell} style={{ left: cell * CELL - 1 }}>
                    A
                  </FxChip>
                ))}
              </FxLane>
            </Roll>
            <Gutter>
              <VScroll $top={315} $h={258} $right={6} />
            </Gutter>
          </RollRow>
          <HScroll>
            <HThumb />
          </HScroll>
          <OrderHead $h={39}>
            <Triangle />
            ORDER
            <GridGlyph>
              <span />
              <span />
              <span />
              <span />
            </GridGlyph>
          </OrderHead>
          <OrderBody>
            <SelectedRing $selected>
              <OrderCard $top="#b2ffb6" $bottom="#8ffb98">
                <CardHead>
                  1:
                  <Chevron />
                </CardHead>
                <CardName>Pattern 00</CardName>
              </OrderCard>
            </SelectedRing>
            <SelectedRing>
              <OrderCard $top="#d09cf9" $bottom="#b768f5">
                <CardHead>
                  2:
                  <Chevron />
                </CardHead>
                <CardName>Pattern 01</CardName>
              </OrderCard>
            </SelectedRing>
            <SelectedRing>
              <OrderCard $top="#fdf2a6" $bottom="#fdec78">
                <CardHead>
                  3:
                  <Chevron />
                </CardHead>
                <CardName>Pattern 02</CardName>
              </OrderCard>
            </SelectedRing>
            <AddCard>
              <Plus size={38} strokeWidth={4} />
            </AddCard>
          </OrderBody>
        </Center>

        <RightPanel>
          <PanelBody>
            <PanelTitle>Rulz_GonaSpace.uge</PanelTitle>
            <Section $pt={14} $pb={12}>
              <FieldRow>
                <div>
                  <Label>Name</Label>
                  <Field>Gona Space</Field>
                </div>
                <div>
                  <Label>Artist</Label>
                  <Field>Rulz</Field>
                </div>
              </FieldRow>
            </Section>
            <Section $pt={14} $pb={13} $plain>
              <Label>Tempo (Ticks Per Row)</Label>
              <Field>
                7<BpmCell>~137 BPM</BpmCell>
              </Field>
            </Section>
            <SectionBar>
              DUTY / INSTRUMENT 01
              <Chevron size={15} />
            </SectionBar>
            <Section $pt={14} $pb={12} $plain>
              <Label $mb={7}>Name</Label>
              <Field>Duty 12.5%</Field>
            </Section>
            <Tabs>
              <Tab $active>Settings</Tab>
              <Tab>Subpattern</Tab>
            </Tabs>
            <KnobSection>
              <KnobGrid>
                <KnobCol>
                  <KnobLabel>
                    <Check />
                    Length
                  </KnobLabel>
                  <Knob value={1} angle={-135} />
                </KnobCol>
                <KnobCol>
                  <KnobLabel>Initial Volume</KnobLabel>
                  <Knob value={11} angle={63} start={-135} />
                </KnobCol>
                <KnobCol>
                  <KnobLabel>Change</KnobLabel>
                  <Knob value={0} angle={0} />
                </KnobCol>
              </KnobGrid>
              <Scope>
                <ScopeTop>
                  <ScopeLine />
                </ScopeTop>
              </Scope>
            </KnobSection>
            <Section $pt={14} $pb={13}>
              <Label $mb={6}>Duty Cycle</Label>
              <SelectField>
                25%
                <DutyRight>
                  <svg width="98" height="18" viewBox="0 0 98 18">
                    <path d="M0.5 18V1.5H13.5V17H50.5V1.5H63.5V17H98" fill="none" stroke="#666" strokeWidth="1" />
                  </svg>
                  <Chevron />
                </DutyRight>
              </SelectField>
            </Section>
            <Section $pt={14} $pb={7}>
              <FieldRow>
                <div>
                  <Label>Sweep Shift</Label>
                  <Slider>
                    <SliderThumb />
                  </Slider>
                </div>
                <div>
                  <Label>Sweep Time</Label>
                  <SelectField $h={35}>
                    None
                    <Chevron />
                  </SelectField>
                </div>
              </FieldRow>
            </Section>
            <Section $pt={16} $pb={0} $plain>
              <Label $mb={6}>Test Instrument</Label>
              <NoteBtns>
                {["C3", "C4", "C5", "C6", "C7", "C8"].map((note) => (
                  <NoteBtn key={note}>{note}</NoteBtn>
                ))}
              </NoteBtns>
            </Section>
          </PanelBody>
          <VScroll $top={5} $h={890} $right={3} />
        </RightPanel>
      </Main>
    </Page>
  );
};

export default App;
